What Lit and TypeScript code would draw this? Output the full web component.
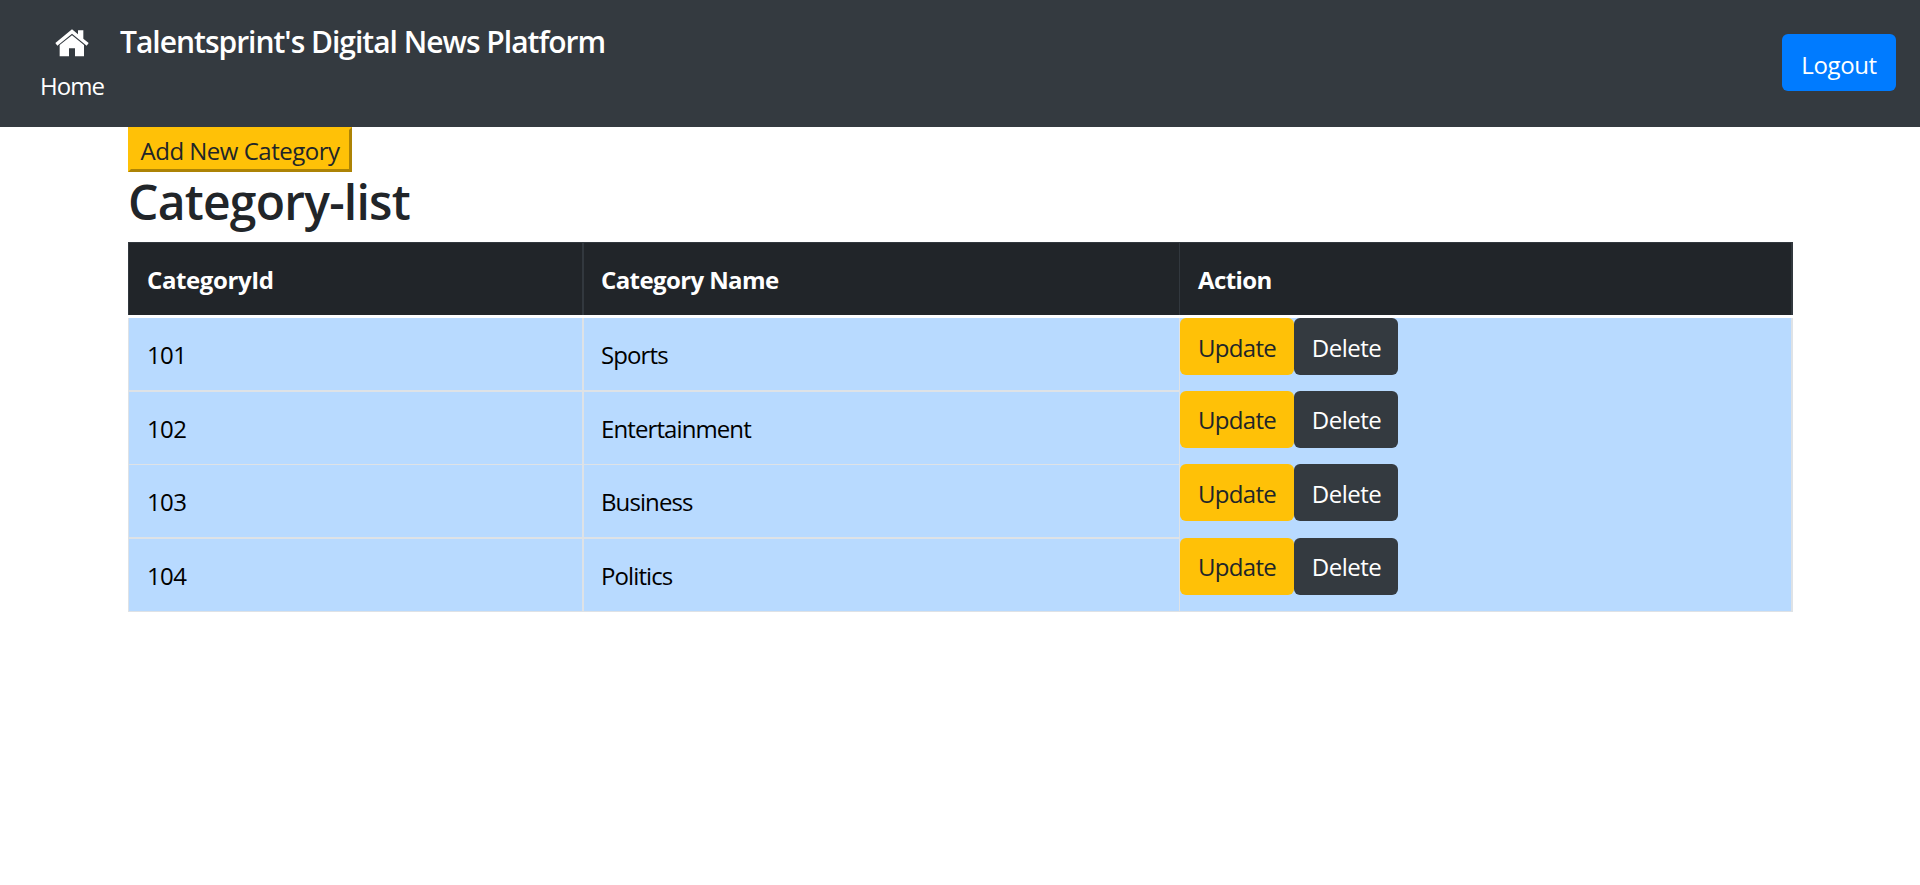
import { LitElement, html, css } from "lit";
import { customElement, state } from "lit/decorators.js";

interface Category {
  id: number;
  name: string;
}

@customElement("app-navbar")
class AppNavbar extends LitElement {
  static styles = css`
    :host {
      display: flex;
      align-items: flex-start;
      box-sizing: border-box;
      height: 127px;
      padding: 0 24px 0 39px;
      background: #343a40;
      color: #fff;
      font-size: 24px;
    }
    .home {
      display: flex;
      flex-direction: column;
      align-items: center;
      width: 66px;
      padding-top: 29px;
      color: #fff;
      text-decoration: none;
    }
    .icon {
      display: block;
      width: 34px;
      height: 28px;
    }
    .home-label {
      margin-top: 11px;
      line-height: 36px;
      letter-spacing: -0.9px;
    }
    .brand {
      margin-left: 15px;
      padding-top: 19px;
      font-size: 30px;
      font-weight: 600;
      line-height: 45px;
      letter-spacing: -1.006px;
      white-space: nowrap;
    }
    .logout {
      box-sizing: border-box;
      width: 114px;
      height: 57px;
      margin: 34px 0 0 auto;
      padding: 4px 0 0;
      border: 0;
      border-radius: 6px;
      background: #007bff;
      color: #fff;
      font: inherit;
      letter-spacing: -0.4px;
    }
  `;

  render() {
    return html`
      <a class="home">
        <svg class="icon" viewBox="76 56 102 84" fill="#fff">
          <path d="M127 57 145 72V60H161V85L177 98 171 106 127 70 83 106 77 98Z" />
          <path d="M127 75 163 104V138H136V114H118V138H90V104Z" />
        </svg>
        <span class="home-label">Home</span>
      </a>
      <span class="brand">Talentsprint's Digital News Platform</span>
      <button class="logout">Logout</button>
    `;
  }
}

@customElement("category-table")
class CategoryTable extends LitElement {
  static properties = { categories: { attribute: false } };
  declare categories: Category[];

  static styles = css`
    :host {
      display: block;
      font-size: 24px;
    }
    .row {
      display: grid;
      grid-template-columns: 456px 596px 613px;
      box-sizing: border-box;
      height: 74px;
      background: #b8daff;
      color: #000;
    }
    .row.short {
      height: 73px;
    }
    .cell {
      box-sizing: border-box;
      padding: 19px 0 0 17px;
      line-height: 36px;
      border-right: 2px solid #dee2e6;
      border-bottom: 2px solid #dee2e6;
      letter-spacing: -0.9px;
      white-space: nowrap;
    }
    .row.short .cell {
      border-bottom-width: 1px;
    }
    .cell.id {
      padding-left: 18px;
      border-left: 1px solid #dee2e6;
      letter-spacing: -0.6px;
    }
    .cell.name {
      border-right-width: 1px;
    }
    .cell.action {
      display: flex;
      align-items: flex-start;
      padding: 0;
      border-bottom: 0;
    }
    .row.last .cell.action {
      border-bottom: 1px solid #dee2e6;
    }
    .row.head {
      height: 76px;
      border-bottom: 3px solid #fff;
      background: #212529;
      color: #fff;
      font-weight: 700;
    }
    .head .cell {
      padding: 19px 0 0 17px;
      border-color: #32383e;
      border-bottom: 0;
      border-top: 1px solid #32383e;
      letter-spacing: -0.6px;
    }
    .head .cell.id {
      padding-left: 18px;
      letter-spacing: -0.4px;
    }
    .head .cell.action {
      padding-left: 18px;
    }
    .button {
      box-sizing: border-box;
      height: 57px;
      padding: 2px 0 0;
      border: 0;
      border-radius: 6px;
      font: inherit;
    }
    .row:not(.first) .button {
      margin-top: -1px;
    }
    .row.short .button {
      padding-top: 0;
    }
    .update {
      width: 114px;
      background: #ffc107;
      color: #212529;
      letter-spacing: -0.7px;
    }
    .button.delete {
      width: 104px;
      padding-left: 1px;
      padding-right: 0;
      background: #343a40;
      color: #fff;
      letter-spacing: -0.5px;
    }
  `;

  render() {
    const last = this.categories.length - 1;
    return html`
      <div class="row head">
        <div class="cell id">CategoryId</div>
        <div class="cell name">Category Name</div>
        <div class="cell action">Action</div>
      </div>
      ${this.categories.map(
        (c, i) => html`
          <div
            class="row ${i === 0 ? "first" : ""} ${i % 2 ? "short" : ""} ${i === last ? "last" : ""}"
          >
            <div class="cell id">${c.id}</div>
            <div class="cell name">${c.name}</div>
            <div class="cell action">
              <button class="button update">Update</button
              ><button class="button delete">Delete</button>
            </div>
          </div>
        `
      )}
    `;
  }
}

@customElement("app-root")
class AppRoot extends LitElement {
  static styles = css`
    :host {
      display: block;
      min-height: 885px;
      background: #fff;
      color: #212529;
      font-family: "Open Sans", "Noto Sans", sans-serif;
      font-size: 24px;
    }
    .container {
      width: 1665px;
      margin-left: 128px;
    }
    .add {
      display: block;
      box-sizing: border-box;
      width: 224px;
      height: 45px;
      padding: 2px 0 0;
      border: 3px solid;
      border-color: #ffc107 #ad8305 #ad8305 #ffc107;
      background: #ffc107;
      color: #212529;
      font: inherit;
      letter-spacing: -0.5px;
    }
    .title {
      box-sizing: border-box;
      margin: 0;
      padding-top: 1px;
      height: 70px;
      font-size: 48px;
      font-weight: 600;
      line-height: 58px;
      letter-spacing: -0.76px;
    }
  `;

  @state() private categories: Category[] = [
    { id: 101, name: "Sports" },
    { id: 102, name: "Entertainment" },
    { id: 103, name: "Business" },
    { id: 104, name: "Politics" },
  ];

  render() {
    return html`
      <app-navbar></app-navbar>
      <main class="container">
        <button class="add">Add New Category</button>
        <h2 class="title">Category-list</h2>
        <category-table .categories=${this.categories}></category-table>
      </main>
    `;
  }
}
